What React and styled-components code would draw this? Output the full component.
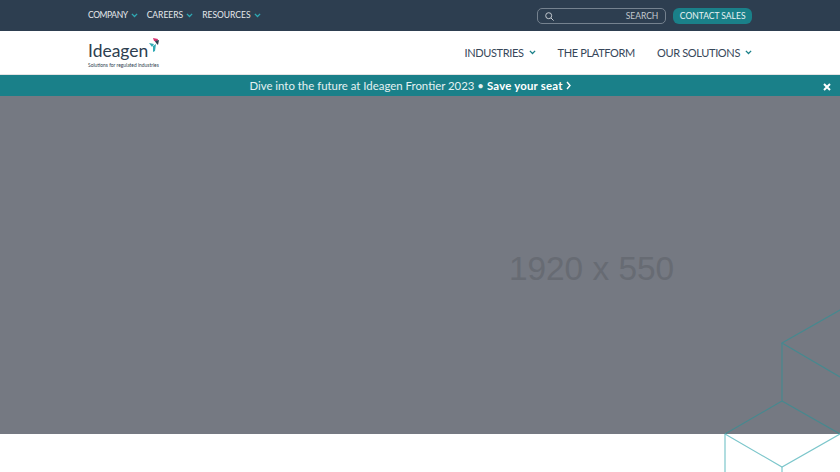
import React from "react";
import styled, { createGlobalStyle } from "styled-components";

const GlobalStyle = createGlobalStyle`
  html, body {
    margin: 0;
    padding: 0;
    background: #fff;
    font-family: "Lato", "Liberation Sans", sans-serif;
  }
`;

const Page = styled.div`
  position: relative;
  width: 840px;
  height: 472px;
  overflow: hidden;
  display: flex;
  flex-direction: column;
`;

const TopBar = styled.div`
  height: 31px;
  background: #2d3e50;
  padding: 0 88px;
  display: flex;
  align-items: center;
  justify-content: space-between;
`;

const TopLinks = styled.div`
  display: flex;
  gap: 9px;
`;

const TopLink = styled.a`
  display: flex;
  align-items: center;
  gap: 3px;
  color: #e6e9ec;
  font-size: 8.5px;
  line-height: 13px;
  letter-spacing: ${({ $spacing }) => $spacing || 0}px;
`;

const TopRight = styled.div`
  display: flex;
  align-items: center;
  gap: 7px;
`;

const SearchBox = styled.div`
  box-sizing: border-box;
  width: 129px;
  height: 16px;
  margin-top: 1px;
  border: 1px solid #75828f;
  border-radius: 5px;
  padding: 0 7px;
  display: flex;
  align-items: center;
  justify-content: space-between;
  color: #c3c9cf;
  font-size: 8.5px;
`;

const ContactButton = styled.a`
  height: 16px;
  padding: 0 6.5px;
  border-radius: 6px;
  background: #1a8089;
  color: #e9f3f4;
  font-size: 8.5px;
  line-height: 16px;
`;

const MainNav = styled.div`
  box-sizing: border-box;
  height: 44px;
  background: #fff;
  border-bottom: 1px solid #e4e4e4;
  padding: 0 88px;
  display: flex;
  align-items: center;
  justify-content: space-between;
`;

const Logo = styled.div`
  position: relative;
  width: 71px;
  height: 32px;
  color: #2d3e50;
`;

const LogoWord = styled.div`
  font-size: 17.5px;
  line-height: 22px;
  margin-top: 3px;
`;

const LogoTag = styled.div`
  font-size: 4.9px;
  line-height: 6px;
  white-space: nowrap;
`;

const LogoMark = styled.svg`
  position: absolute;
  right: 0;
  top: 1px;
`;

const NavLinks = styled.div`
  display: flex;
  gap: 22px;
`;

const NavLink = styled.a`
  display: flex;
  align-items: center;
  gap: 5px;
  color: #37475a;
  font-size: 11px;
  letter-spacing: -0.35px;
  line-height: 16px;
`;

const Banner = styled.div`
  position: relative;
  box-sizing: border-box;
  height: 21px;
  padding-right: 20px;
  background: #1a8089;
  color: #e4f1f2;
  display: flex;
  align-items: center;
  justify-content: center;
  font-size: 11.4px;
`;

const BannerStrong = styled.strong`
  margin-left: 3px;
  color: #fff;
  font-weight: 700;
  letter-spacing: 0.2px;
  display: flex;
  align-items: center;
  gap: 3px;
`;

const CloseIcon = styled.svg`
  position: absolute;
  right: 9px;
  top: 8px;
`;

const Hero = styled.div`
  height: 338px;
  background: #757982;
  display: flex;
  align-items: center;
  justify-content: center;
  padding-left: 343px;
  box-sizing: border-box;
`;

const HeroLabel = styled.div`
  font-family: "Liberation Sans", sans-serif;
  font-size: 33.4px;
  color: #676b73;
  margin-top: 8px;
`;

const Hexagons = styled.svg`
  position: absolute;
  left: 0;
  top: 0;
  pointer-events: none;
`;

const Chevron = ({ size = 7, color = "#2fa9b4" }) => (
  <svg width={size} height={size * 0.625} viewBox="0 0 8 5" fill="none">
    <path d="M1 1l3 3 3-3" stroke={color} strokeWidth="1.5" />
  </svg>
);

const hexLines = [
  "M840 310L782 343L840 377",
  "M782 343V401L725 434",
  "M782 401L840 434",
];

const hexLinesBelow = ["M725 434V472", "M725 434L782 467L840 434", "M782 467V472"];

export default function App() {
  return (
    <Page>
      <GlobalStyle />
      <TopBar>
        <TopLinks>
          <TopLink $spacing={-0.4}>COMPANY <Chevron /></TopLink>
          <TopLink>CAREERS <Chevron /></TopLink>
          <TopLink>RESOURCES <Chevron /></TopLink>
        </TopLinks>
        <TopRight>
          <SearchBox>
            <svg width="9" height="9" viewBox="0 0 9 9" fill="none" stroke="#c3c9cf">
              <circle cx="3.7" cy="3.7" r="3" />
              <path d="M6 6l2.6 2.6" />
            </svg>
            SEARCH
          </SearchBox>
          <ContactButton>CONTACT SALES</ContactButton>
        </TopRight>
      </TopBar>
      <MainNav>
        <Logo>
          <LogoWord>Ideagen</LogoWord>
          <LogoTag>Solutions for regulated industries</LogoTag>
          <LogoMark width="11" height="14" viewBox="0 0 11 14">
            <path d="M5 0l5 1-1 3-3-1z" fill="#d6336f" />
            <path d="M7 3l4-1-1 5-2-2z" fill="#2d3e50" />
            <path d="M1 5l5 1-2 3z" fill="#2fa9b4" />
            <path d="M5 8l3-2-1 7-2 1z" fill="#2fa9b4" />
          </LogoMark>
        </Logo>
        <NavLinks>
          <NavLink>INDUSTRIES <Chevron color="#1a8089" /></NavLink>
          <NavLink>THE PLATFORM</NavLink>
          <NavLink>OUR SOLUTIONS <Chevron color="#1a8089" /></NavLink>
        </NavLinks>
      </MainNav>
      <Banner>
        Dive into the future at Ideagen Frontier 2023 •
        <BannerStrong>
          Save your seat
          <svg width="5" height="9" viewBox="0 0 5 9" fill="none">
            <path d="M1 1l3 3.5-3 3.5" stroke="#fff" strokeWidth="1.4" />
          </svg>
        </BannerStrong>
        <CloseIcon width="8" height="8" viewBox="0 0 8 8">
          <path d="M1 1l6 6M7 1l-6 6" stroke="#fff" strokeWidth="2" />
        </CloseIcon>
      </Banner>
      <Hero>
        <HeroLabel>1920 x 550</HeroLabel>
      </Hero>
      <Hexagons width="840" height="472" viewBox="0 0 840 472" fill="none">
        {hexLines.map((d) => (
          <path key={d} d={d} stroke="#46898f" strokeWidth="1.2" />
        ))}
        {hexLinesBelow.map((d) => (
          <path key={d} d={d} stroke="#7cc6cb" strokeWidth="1.2" />
        ))}
      </Hexagons>
    </Page>
  );
}
